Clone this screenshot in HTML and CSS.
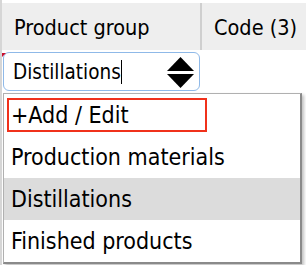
FILE: index.html
```html
<!DOCTYPE html>
<html lang="en">
<head>
  <meta charset="UTF-8" />
  <title>Product group</title>
  <link rel="stylesheet" href="styles.css">
</head>
<body>
  <div class="sheet">
    <div class="head-row">
      <div class="head-cell group-col">Product group</div>
      <div class="head-cell">Code (3)</div>
    </div>

    <div class="edit-row">
      <span class="error-mark"></span>
      <div class="picker">
        <span class="picker-text">Distillations</span><span class="caret"></span>
        <svg class="spin" width="27" height="31" viewBox="0 0 27 31">
          <polygon points="0,14 13.5,0 27,14" fill="#000" />
          <polygon points="0,17 27,17 13.5,31" fill="#000" />
        </svg>
      </div>
    </div>

    <ul class="options">
      <li class="option"><span class="add-edit">+Add / Edit</span></li>
      <li class="option">Production materials</li>
      <li class="option selected">Distillations</li>
      <li class="option">Finished products</li>
    </ul>
  </div>
</body>
</html>
```

FILE: styles.css
```css
html, body {
  margin: 0;
  padding: 0;
  background: #fff;
  font-family: 'DejaVu Sans', Verdana, sans-serif;
  font-stretch: condensed;
  color: #000;
  overflow: hidden;
}

.sheet {
  width: 304px;
  height: 262px;
  border-left: 2px solid #d6d6d6;
  padding-top: 3px;
}

.head-row {
  display: flex;
  height: 47px;
  background: #eeeeee;
  font-size: 21.5px;
}

.head-cell {
  display: flex;
  align-items: center;
  padding-left: 12px;
  padding-top: 2px;
}

.group-col {
  width: 186px;
  border-right: 2px solid #cfcfcf;
}

.edit-row {
  position: relative;
  height: 41px;
}

.error-mark {
  position: absolute;
  top: 1px;
  left: 0;
  width: 0;
  height: 0;
  border-top: 4px solid #c8102e;
  border-right: 4px solid transparent;
}

.picker {
  display: flex;
  align-items: center;
  box-sizing: border-box;
  width: 197px;
  height: 39px;
  margin: 2px 0 0 1px;
  padding: 0 5px 0 9px;
  border: 1.5px solid #8fb9e8;
  border-radius: 6px;
  font-size: 20.5px;
}

.caret {
  display: inline-block;
  width: 1px;
  height: 24px;
  background: #000;
}

.spin {
  margin-left: auto;
  margin-top: 2px;
}

.options {
  list-style: none;
  margin: 0 0 0 1px;
  padding: 0;
  width: 296px;
  background: #fff;
  border: 1px solid #b0b0b0;
  border-right: 2px solid #8a8a8a;
  border-bottom: 2px solid #8a8a8a;
  box-shadow: 2px 2px 3px rgba(0, 0, 0, 0.25);
  font-size: 23px;
}

.option {
  display: flex;
  align-items: center;
  height: 42px;
  padding-left: 7px;
}

.option.selected {
  background: #dcdcdc;
}

.add-edit {
  display: block;
  box-sizing: border-box;
  width: 200px;
  height: 34px;
  margin-left: -4px;
  padding: 0 0 0 2px;
  border: 2px solid #f0311b;
  line-height: 30px;
}
```
